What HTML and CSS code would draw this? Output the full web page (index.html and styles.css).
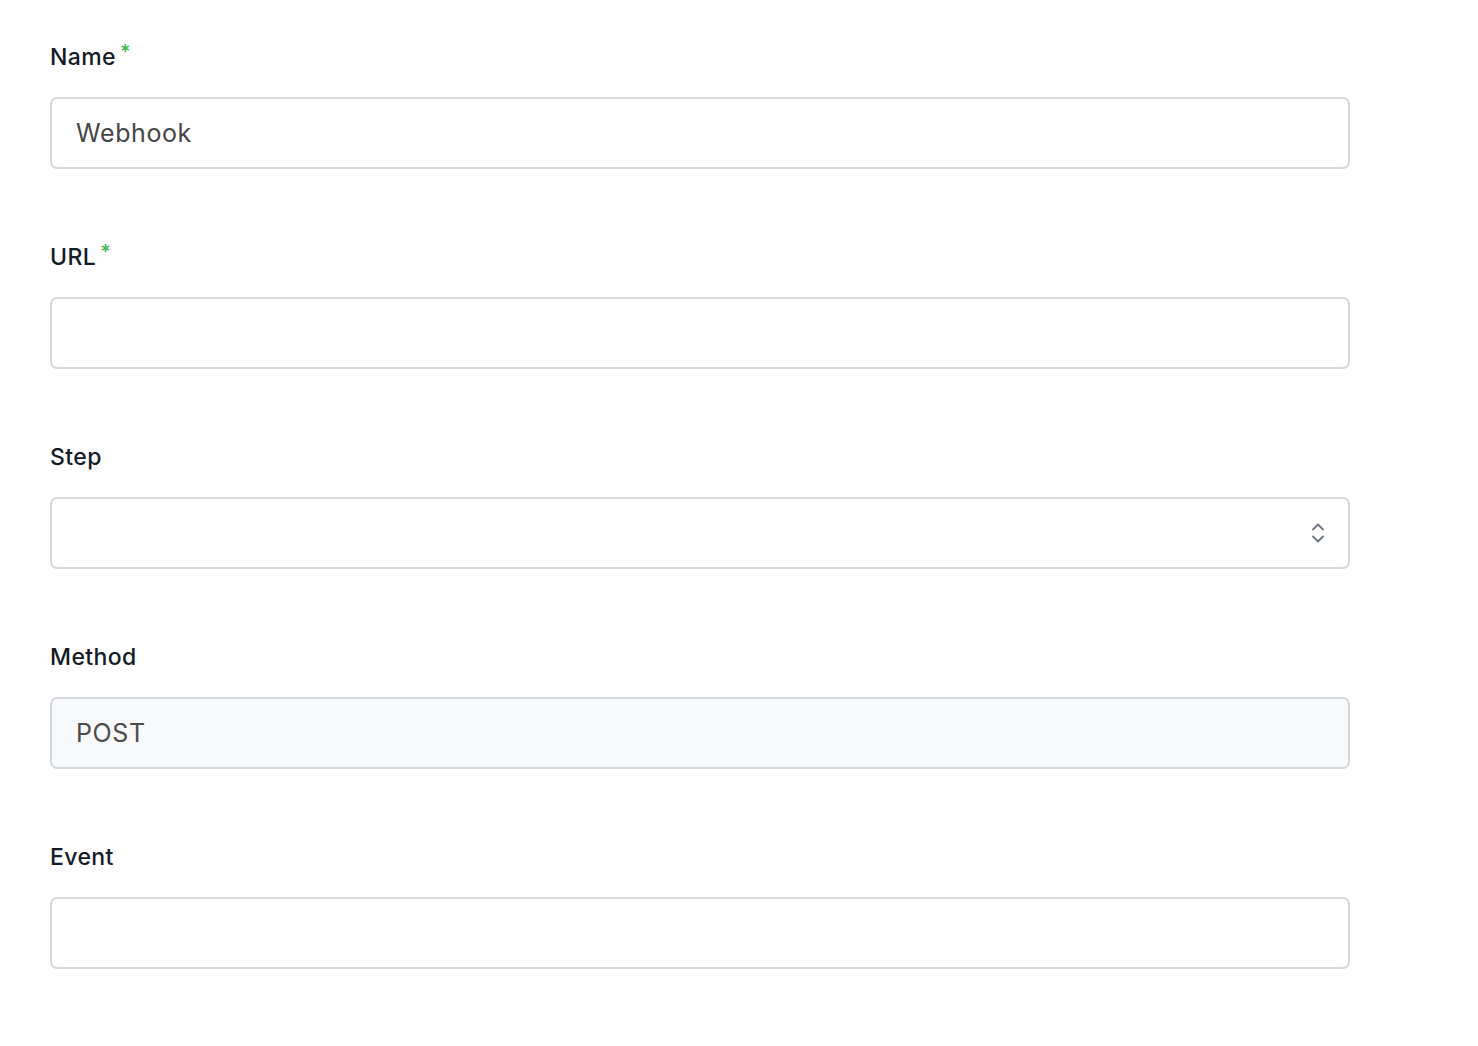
FILE: index.html
```html
<!DOCTYPE html>
<html lang="en">
<head>
    <meta charset="UTF-8">
    <meta name="viewport" content="width=device-width, initial-scale=1.0">
    <title>Webhook</title>
    <link rel="stylesheet" href="styles.css">
</head>
<body>
    <form class="webhook-form">
        <div class="field">
            <label for="name">Name<span class="required">*</span></label>
            <input type="text" id="name" value="Webhook">
        </div>
        <div class="field">
            <label for="url">URL<span class="required">*</span></label>
            <input type="text" id="url">
        </div>
        <div class="field">
            <label for="step">Step</label>
            <div class="select-wrap">
                <select id="step">
                    <option></option>
                </select>
                <svg class="select-icon" width="16" height="24" viewBox="0 0 16 24" fill="none" stroke="#6b7280" stroke-width="1.8" stroke-linecap="round" stroke-linejoin="round">
                    <path d="M3 8.5 L8 3.5 L13 8.5"/>
                    <path d="M3 15.5 L8 20.5 L13 15.5"/>
                </svg>
            </div>
        </div>
        <div class="field">
            <label for="method">Method</label>
            <input type="text" id="method" value="POST" disabled>
        </div>
        <div class="field">
            <label for="event">Event</label>
            <input type="text" id="event">
        </div>
    </form>
</body>
</html>
```

FILE: styles.css
```css
body {
    margin: 0;
    font-family: "Inter", "Noto Sans", sans-serif;
    background: #fff;
    color: #111827;
}
.webhook-form {
    padding: 42px 0 0 50px;
    width: 1300px;
}
.field {
    margin-bottom: 73px;
}
.field label {
    display: block;
    font-size: 23px;
    font-weight: 500;
    line-height: 30px;
    letter-spacing: 0.4px;
    margin-bottom: 25px;
    color: #141a26;
}
.required {
    color: #3fb54a;
    font-size: 20px;
    vertical-align: top;
    position: relative;
    top: -5px;
    margin-left: 4px;
}
.field input,
.field select {
    display: block;
    box-sizing: border-box;
    width: 100%;
    height: 72px;
    padding: 0 24px;
    border: 2px solid #d5d8dd;
    border-radius: 7px;
    font-family: inherit;
    font-size: 25px;
    letter-spacing: 0.6px;
    color: #454545;
    background: #fff;
    outline: none;
}
.field input:disabled {
    background: #f8f9fb;
    color: #4b4b4b;
}
.select-wrap {
    position: relative;
}
.field select {
    appearance: none;
    -webkit-appearance: none;
}
.select-icon {
    position: absolute;
    right: 24px;
    top: 24px;
    pointer-events: none;
}
```
